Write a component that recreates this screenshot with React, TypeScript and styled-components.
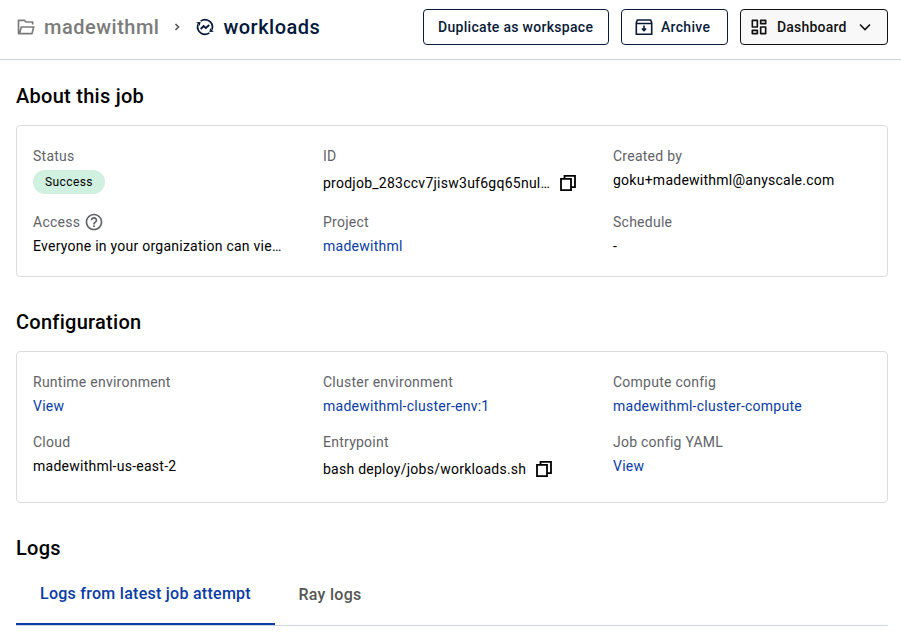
import React from "react";
import styled, { createGlobalStyle, css } from "styled-components";
import { RiFolderOpenLine, RiDashboardLine } from "react-icons/ri";
import { MdHelpOutline } from "react-icons/md";

const GlobalStyle = createGlobalStyle`
  * { box-sizing: border-box; }
  body {
    margin: 0;
    background: #fff;
    color: #000;
    font-family: Roboto, "Liberation Sans", sans-serif;
    overflow: hidden;
  }
  svg { display: block; flex: none; }
`;

const Header = styled.header`
  display: flex;
  align-items: center;
  justify-content: space-between;
  height: 60px;
  padding: 0 13px 6px 16px;
  border-bottom: 1px solid #ccd4de;
`;

const Breadcrumbs = styled.nav`
  display: flex;
  align-items: center;
`;

const Crumb = styled.span<{ $current?: boolean }>`
  display: flex;
  align-items: center;
  gap: 8px;
  font-size: 20px;
  font-weight: 500;
  line-height: 28px;
  letter-spacing: 0.5px;
  color: ${(p) => (p.$current ? "#03183b" : "#7b7b7b")};
`;

const Separator = styled.span`
  display: flex;
  justify-content: center;
  width: 36px;
  color: #555;
`;

const Actions = styled.div`
  display: flex;
  gap: 12px;
`;

const Button = styled.button<{ $width: number; $inset: number; $filled?: boolean }>`
  display: flex;
  align-items: center;
  width: ${(p) => p.$width}px;
  height: 36px;
  padding: 0 0 0 ${(p) => p.$inset}px;
  border: 1px solid #0a1b3a;
  border-radius: 4px;
  background: #fff;
  color: #0a1b3a;
  font: 500 14px/20px Roboto, sans-serif;
  letter-spacing: 0.3px;
  white-space: nowrap;
  gap: 8px;
  ${(p) =>
    p.$filled &&
    css`
      background: #f8f8f8;
      border-color: #111;
      color: #111;
      letter-spacing: 0.2px;
    `}
`;

const MenuArrow = styled.span`
  margin-left: 4px;
`;

const Main = styled.main`
  width: 872px;
  margin: 20px 0 0 16px;
`;

const Section = styled.section`
  margin-bottom: 29px;
`;

const Heading = styled.h2`
  margin: 0;
  font-size: 20px;
  font-weight: 500;
  line-height: 32px;
  letter-spacing: 0.27px;
`;

const Panel = styled.div`
  display: grid;
  grid-template-columns: repeat(3, 258px);
  column-gap: 32px;
  row-gap: 12px;
  margin-top: 13px;
  padding: 18px 16px;
  border: 1px solid #dcdddf;
  border-radius: 4px;
`;

const Field = styled.div`
  font-size: 14px;
  line-height: 24px;
  letter-spacing: 0.25px;
  white-space: nowrap;
`;

const Label = styled.div`
  display: flex;
  align-items: center;
  gap: 4px;
  height: 24px;
  color: #5f6368;
`;

const Value = styled.div<{ $tall?: boolean }>`
  display: flex;
  align-items: center;
  gap: 7.4px;
  height: ${(p) => (p.$tall ? 30 : 24)}px;
`;

const Link = styled.a`
  color: #0a3ba6;
`;

const Badge = styled.span`
  display: flex;
  align-items: center;
  justify-content: center;
  width: 72px;
  height: 24px;
  margin-top: 2px;
  border-radius: 12px;
  background: #d0f0e0;
  font-size: 12px;
  letter-spacing: 0.4px;
`;

const Tabs = styled.div`
  display: flex;
  height: 62px;
  border-bottom: 1px solid #ccd6e2;
`;

const Tab = styled.div<{ $active?: boolean }>`
  padding: 19px 24px 0 23.5px;
  font-size: 16px;
  font-weight: 500;
  line-height: 24px;
  letter-spacing: 0.27px;
  white-space: nowrap;
  color: #555;
  ${(p) =>
    p.$active &&
    css`
      width: 259px;
      padding: 18px 24px 0;
      color: #0a3ba6;
      border-bottom: 2px solid #0a3ba6;
    `}
`;

const JobIcon = () => (
  <svg width="20" height="20" viewBox="0 0 20 20" fill="none" stroke="currentColor" strokeWidth="1.7">
    <path d="M5.6 4.1A7.4 7.4 0 0 1 16.9 12.6M14.4 15.9A7.4 7.4 0 0 1 3.1 7.4" />
    <path d="M1.3 5.2l4.3-.2-.8 3.7zM18.7 14.8l-4.3.2.8-3.7z" fill="currentColor" stroke="none" />
    <path d="M5.7 12l2.9-2.9 2.2 1.9L14.2 8" strokeWidth="1.9" />
  </svg>
);

const ArchiveIcon = () => (
  <svg width="18" height="18" viewBox="0 0 18 18" fill="none" stroke="currentColor" strokeWidth="1.6">
    <path d="M1.3 4.6L2.4 2h13.2l1.1 2.6v11.6H1.3zM1.3 5.5h15.4" />
    <path d="M9 7.5v5M6.9 10.5L9 12.6l2.1-2.1" />
  </svg>
);

const CopyIcon = () => (
  <svg width="20" height="20" viewBox="0 0 20 20" fill="none" stroke="currentColor" strokeWidth="1.8">
    <path d="M3 5.8h10v11.4H3z" />
    <path d="M6.5 5.5V2.8H17v11.4h-3.5" />
  </svg>
);

const Chevron = ({ down }: { down?: boolean }) => (
  <svg width="12" height="12" viewBox="0 0 12 12" fill="none" stroke="currentColor" strokeWidth="1.6">
    <path d={down ? "M1 3.5l5 5 5-5" : "M4.5 3l3 3-3 3"} />
  </svg>
);

export default function App() {
  return (
    <>
      <GlobalStyle />
      <Header>
        <Breadcrumbs>
          <Crumb>
            <RiFolderOpenLine size={20} />
            madewithml
          </Crumb>
          <Separator>
            <Chevron />
          </Separator>
          <Crumb $current>
            <JobIcon />
            workloads
          </Crumb>
        </Breadcrumbs>
        <Actions>
          <Button $width={186} $inset={14}>
            Duplicate as workspace
          </Button>
          <Button $width={107} $inset={13}>
            <ArchiveIcon />
            Archive
          </Button>
          <Button $width={148} $inset={8} $filled>
            <RiDashboardLine size={20} />
            Dashboard
            <MenuArrow>
              <Chevron down />
            </MenuArrow>
          </Button>
        </Actions>
      </Header>
      <Main>
        <Section>
          <Heading>About this job</Heading>
          <Panel>
            <Field>
              <Label>Status</Label>
              <Badge>Success</Badge>
            </Field>
            <Field>
              <Label>ID</Label>
              <Value $tall>
                prodjob_283ccv7jisw3uf6gq65nul…
                <CopyIcon />
              </Value>
            </Field>
            <Field>
              <Label>Created by</Label>
              <Value>goku+madewithml@anyscale.com</Value>
            </Field>
            <Field>
              <Label>
                Access
                <MdHelpOutline size={20} />
              </Label>
              <Value>Everyone in your organization can vie…</Value>
            </Field>
            <Field>
              <Label>Project</Label>
              <Value>
                <Link>madewithml</Link>
              </Value>
            </Field>
            <Field>
              <Label>Schedule</Label>
              <Value>-</Value>
            </Field>
          </Panel>
        </Section>
        <Section>
          <Heading>Configuration</Heading>
          <Panel>
            <Field>
              <Label>Runtime environment</Label>
              <Value>
                <Link>View</Link>
              </Value>
            </Field>
            <Field>
              <Label>Cluster environment</Label>
              <Value>
                <Link>madewithml-cluster-env:1</Link>
              </Value>
            </Field>
            <Field>
              <Label>Compute config</Label>
              <Value>
                <Link>madewithml-cluster-compute</Link>
              </Value>
            </Field>
            <Field>
              <Label>Cloud</Label>
              <Value>madewithml-us-east-2</Value>
            </Field>
            <Field>
              <Label>Entrypoint</Label>
              <Value $tall>
                bash deploy/jobs/workloads.sh
                <CopyIcon />
              </Value>
            </Field>
            <Field>
              <Label>Job config YAML</Label>
              <Value>
                <Link>View</Link>
              </Value>
            </Field>
          </Panel>
        </Section>
        <Section>
          <Heading>Logs</Heading>
          <Tabs>
            <Tab $active>Logs from latest job attempt</Tab>
            <Tab>Ray logs</Tab>
          </Tabs>
        </Section>
      </Main>
    </>
  );
}
